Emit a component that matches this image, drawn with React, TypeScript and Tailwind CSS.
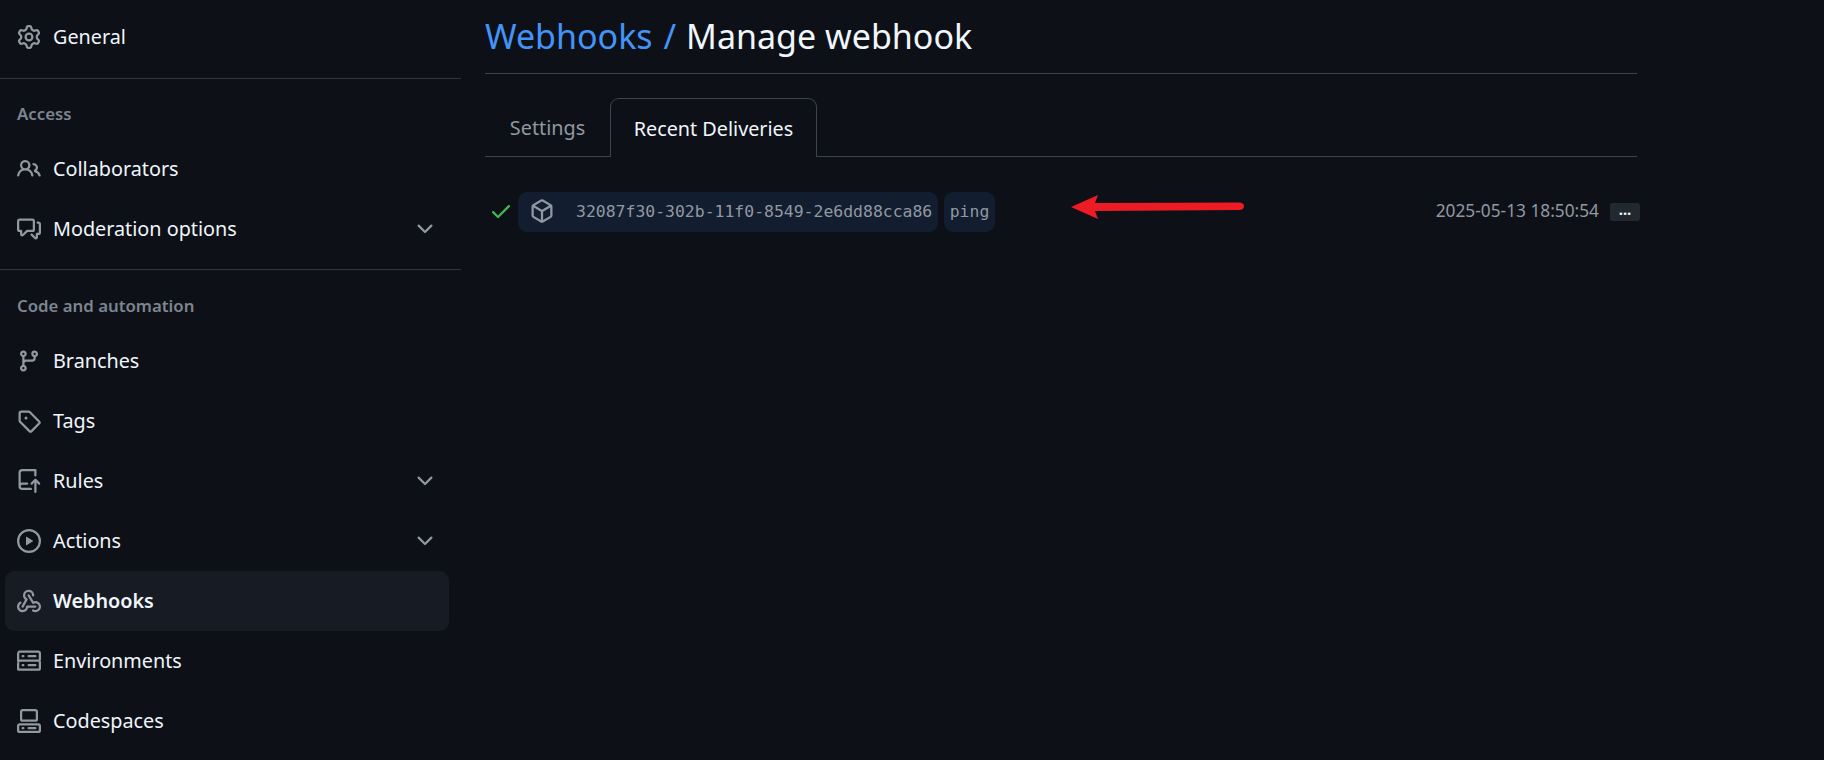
// octicons, 16px variants: the reference scales these up so strokes are heavier than the 24px set
const icons = {
  gear: 'M8 0a8.2 8.2 0 0 1 .701.031C9.444.095 9.99.645 10.16 1.29l.288 1.107c.018.066.079.158.212.224.231.114.454.243.668.386.123.082.233.09.299.071l1.103-.303c.644-.176 1.392.021 1.82.63.27.385.506.792.704 1.218.315.675.111 1.422-.364 1.891l-.814.806c-.049.048-.098.147-.088.294.016.257.016.515 0 .772-.01.147.038.246.088.294l.814.806c.475.469.679 1.216.364 1.891a7.977 7.977 0 0 1-.704 1.217c-.428.61-1.176.807-1.82.63l-1.102-.302c-.067-.019-.177-.011-.3.071a5.909 5.909 0 0 1-.668.386c-.133.066-.194.158-.211.224l-.29 1.106c-.168.646-.715 1.196-1.458 1.26a8.006 8.006 0 0 1-1.402 0c-.743-.064-1.289-.614-1.458-1.26l-.289-1.106c-.018-.066-.079-.158-.212-.224a5.738 5.738 0 0 1-.668-.386c-.123-.082-.233-.09-.299-.071l-1.103.303c-.644.176-1.392-.021-1.82-.63a8.12 8.12 0 0 1-.704-1.218c-.315-.675-.111-1.422.363-1.891l.815-.806c.05-.048.098-.147.088-.294a6.214 6.214 0 0 1 0-.772c.01-.147-.038-.246-.088-.294l-.815-.806C.635 6.045.431 5.298.746 4.623a7.92 7.92 0 0 1 .704-1.217c.428-.61 1.176-.807 1.82-.63l1.102.302c.067.019.177.011.3-.071.214-.143.437-.272.668-.386.133-.066.194-.158.211-.224l.29-1.106C6.009.645 6.556.095 7.299.03 7.53.01 7.764 0 8 0Zm-.571 1.525c-.036.003-.108.036-.137.146l-.289 1.105c-.147.561-.549.967-.998 1.189-.173.086-.34.183-.5.29-.417.278-.97.423-1.529.27l-1.103-.303c-.109-.03-.175.016-.195.045-.22.312-.412.644-.573.99-.014.031-.021.11.059.19l.815.806c.411.406.562.957.53 1.456a4.709 4.709 0 0 0 0 .582c.032.499-.119 1.05-.53 1.456l-.815.806c-.081.08-.073.159-.059.19.162.346.353.677.573.989.02.03.085.076.195.046l1.102-.303c.56-.153 1.113-.008 1.53.27.161.107.328.204.501.29.447.222.85.629.997 1.189l.289 1.105c.029.109.101.143.137.146a6.6 6.6 0 0 0 1.142 0c.036-.003.108-.036.137-.146l.289-1.105c.147-.561.549-.967.998-1.189.173-.086.34-.183.5-.29.417-.278.97-.423 1.529-.27l1.103.303c.109.029.175-.016.195-.045.22-.313.411-.644.573-.99.014-.031.021-.11-.059-.19l-.815-.806c-.411-.406-.562-.957-.53-1.456a4.709 4.709 0 0 0 0-.582c-.032-.499.119-1.05.53-1.456l.815-.806c.081-.08.073-.159.059-.19a6.464 6.464 0 0 0-.573-.989c-.02-.03-.085-.076-.195-.046l-1.102.303c-.56.153-1.113.008-1.53-.27a4.44 4.44 0 0 0-.501-.29c-.447-.222-.85-.629-.997-1.189l-.289-1.105c-.029-.11-.101-.143-.137-.146a6.6 6.6 0 0 0-1.142 0ZM11 8a3 3 0 1 1-6 0 3 3 0 0 1 6 0ZM9.5 8a1.5 1.5 0 1 0-3.001.001A1.5 1.5 0 0 0 9.5 8Z',
  people: 'M2 5.5a3.5 3.5 0 1 1 5.898 2.549 5.508 5.508 0 0 1 3.034 4.084.75.75 0 1 1-1.482.235 4 4 0 0 0-7.9 0 .75.75 0 0 1-1.482-.236A5.507 5.507 0 0 1 3.102 8.05 3.493 3.493 0 0 1 2 5.5ZM11 4a3.001 3.001 0 0 1 2.22 5.018 5.01 5.01 0 0 1 2.56 3.012.749.749 0 0 1-.885.954.752.752 0 0 1-.549-.514 3.507 3.507 0 0 0-2.522-2.372.75.75 0 0 1-.574-.73v-.352a.75.75 0 0 1 .416-.672A1.5 1.5 0 0 0 11 5.5.75.75 0 0 1 11 4Zm-5.5-.5a2 2 0 1 0-.001 3.999A2 2 0 0 0 5.5 3.5Z',
  discussion: 'M1.75 1h8.5c.966 0 1.75.784 1.75 1.75v5.5A1.75 1.75 0 0 1 10.25 10H7.061l-2.574 2.573A1.458 1.458 0 0 1 2 11.543V10h-.25A1.75 1.75 0 0 1 0 8.25v-5.5C0 1.784.784 1 1.75 1ZM1.5 2.75v5.5c0 .138.112.25.25.25h1a.75.75 0 0 1 .75.75v2.19l2.72-2.72a.749.749 0 0 1 .53-.22h3.5a.25.25 0 0 0 .25-.25v-5.5a.25.25 0 0 0-.25-.25h-8.5a.25.25 0 0 0-.25.25Zm13 2a.25.25 0 0 0-.25-.25h-.5a.75.75 0 0 1 0-1.5h.5c.966 0 1.75.784 1.75 1.75v5.5A1.75 1.75 0 0 1 14.25 12H14v1.543a1.458 1.458 0 0 1-2.487 1.03L9.22 12.28a.749.749 0 0 1 .326-1.275.749.749 0 0 1 .734.215l2.22 2.22v-2.19a.75.75 0 0 1 .75-.75h1a.25.25 0 0 0 .25-.25Z',
  branch: 'M9.5 3.25a2.25 2.25 0 1 1 3 2.122V6A2.5 2.5 0 0 1 10 8.5H6a1 1 0 0 0-1 1v1.128a2.251 2.251 0 1 1-1.5 0V5.372a2.25 2.25 0 1 1 1.5 0v1.836A2.493 2.493 0 0 1 6 7h4a1 1 0 0 0 1-1v-.628A2.25 2.25 0 0 1 9.5 3.25Zm-6 0a.75.75 0 1 0 1.5 0 .75.75 0 0 0-1.5 0Zm8.25-.75a.75.75 0 1 0 0 1.5.75.75 0 0 0 0-1.5ZM4.25 12a.75.75 0 1 0 0 1.5.75.75 0 0 0 0-1.5Z',
  tag: 'M1 7.775V2.75C1 1.784 1.784 1 2.75 1h5.025c.464 0 .91.184 1.238.513l6.25 6.25a1.75 1.75 0 0 1 0 2.474l-5.026 5.026a1.75 1.75 0 0 1-2.474 0l-6.25-6.25A1.752 1.752 0 0 1 1 7.775Zm1.5 0c0 .066.026.13.073.177l6.25 6.25a.25.25 0 0 0 .354 0l5.025-5.025a.25.25 0 0 0 0-.354l-6.25-6.25a.25.25 0 0 0-.177-.073H2.75a.25.25 0 0 0-.25.25ZM6 5a1 1 0 1 1 0 2 1 1 0 0 1 0-2Z',
  repoPush: 'M1 2.5A2.5 2.5 0 0 1 3.5 0h8.75a.75.75 0 0 1 .75.75v3.5a.75.75 0 0 1-1.5 0V1.5h-8a1 1 0 0 0-1 1v6.708A2.493 2.493 0 0 1 3.5 9h3.25a.75.75 0 0 1 0 1.5H3.5a1 1 0 0 0 0 2h5.75a.75.75 0 0 1 0 1.5H3.5A2.5 2.5 0 0 1 1 11.5Zm13.23 7.79h-.001l-1.224-1.224v6.184a.75.75 0 0 1-1.5 0V9.066L10.28 10.29a.75.75 0 0 1-1.06-1.061l2.505-2.504a.75.75 0 0 1 1.06 0L15.29 9.23a.751.751 0 0 1-.018 1.042.751.751 0 0 1-1.042.018Z',
  play: 'M8 0a8 8 0 1 1 0 16A8 8 0 0 1 8 0ZM1.5 8a6.5 6.5 0 1 0 13 0 6.5 6.5 0 0 0-13 0Zm4.879-2.773 4.264 2.559a.25.25 0 0 1 0 .428l-4.264 2.559A.25.25 0 0 1 6 10.559V5.442a.25.25 0 0 1 .379-.215Z',
  webhook: 'M5.5 4.25a2.25 2.25 0 0 1 4.5 0 .75.75 0 0 0 1.5 0 3.75 3.75 0 1 0-6.14 2.889l-2.272 4.258a.75.75 0 0 0 1.324.706L7 7.25a.75.75 0 0 0-.309-1.015A2.25 2.25 0 0 1 5.5 4.25Z M7.364 3.607a.75.75 0 0 1 1.03.257l2.608 4.349a3.75 3.75 0 1 1-.628 6.785.75.75 0 0 1 .752-1.299 2.25 2.25 0 1 0-.033-3.88.75.75 0 0 1-1.03-.256L7.107 4.636a.75.75 0 0 1 .257-1.03Z M2.9 8.776A.75.75 0 0 1 2.625 9.8 2.25 2.25 0 1 0 6 11.75a.75.75 0 0 1 .75-.751h5.5a.75.75 0 0 1 0 1.5H7.425a3.751 3.751 0 1 1-5.55-3.998.75.75 0 0 1 1.024.274Z',
  server: 'M1.75 1h12.5c.966 0 1.75.784 1.75 1.75v4c0 .372-.116.717-.314 1 .198.283.314.628.314 1v4a1.75 1.75 0 0 1-1.75 1.75H1.75A1.75 1.75 0 0 1 0 13.75v-4c0-.372.116-.717.314-1a1.739 1.739 0 0 1-.314-1v-4C0 1.784.784 1 1.75 1ZM1.5 2.75v4c0 .138.112.25.25.25h12.5a.25.25 0 0 0 .25-.25v-4a.25.25 0 0 0-.25-.25H1.75a.25.25 0 0 0-.25.25Zm.25 5.75a.25.25 0 0 0-.25.25v4c0 .138.112.25.25.25h12.5a.25.25 0 0 0 .25-.25v-4a.25.25 0 0 0-.25-.25ZM7 4.75A.75.75 0 0 1 7.75 4h4.5a.75.75 0 0 1 0 1.5h-4.5A.75.75 0 0 1 7 4.75ZM7.75 10h4.5a.75.75 0 0 1 0 1.5h-4.5a.75.75 0 0 1 0-1.5ZM3 4.75A.75.75 0 0 1 3.75 4h.5a.75.75 0 0 1 0 1.5h-.5A.75.75 0 0 1 3 4.75ZM3.75 10h.5a.75.75 0 0 1 0 1.5h-.5a.75.75 0 0 1 0-1.5Z',
  codespaces: 'M0 11.25c0-.966.784-1.75 1.75-1.75h12.5c.966 0 1.75.784 1.75 1.75v3A1.75 1.75 0 0 1 14.25 16H1.75A1.75 1.75 0 0 1 0 14.25Zm2-9.5C2 .784 2.784 0 3.75 0h8.5C13.216 0 14 .784 14 1.75v5a1.75 1.75 0 0 1-1.75 1.75h-8.5A1.75 1.75 0 0 1 2 6.75Zm1.75-.25a.25.25 0 0 0-.25.25v5c0 .138.112.25.25.25h8.5a.25.25 0 0 0 .25-.25v-5a.25.25 0 0 0-.25-.25Zm-2 9.5a.25.25 0 0 0-.25.25v3c0 .138.112.25.25.25h12.5a.25.25 0 0 0 .25-.25v-3a.25.25 0 0 0-.25-.25ZM7 12.75a.75.75 0 0 1 .75-.75h4.5a.75.75 0 0 1 0 1.5h-4.5a.75.75 0 0 1-.75-.75Zm-4 0a.75.75 0 0 1 .75-.75h.5a.75.75 0 0 1 0 1.5h-.5a.75.75 0 0 1-.75-.75Z',
  chevron: 'M12.78 5.22a.749.749 0 0 1 0 1.06l-4.25 4.25a.749.749 0 0 1-1.06 0L3.22 6.28a.749.749 0 1 1 1.06-1.06L8 8.939l3.72-3.719a.749.749 0 0 1 1.06 0Z',
  check: 'M13.78 4.22a.75.75 0 0 1 0 1.06l-7.25 7.25a.75.75 0 0 1-1.06 0L2.22 9.28a.751.751 0 0 1 .018-1.042.751.751 0 0 1 1.042-.018L6 10.94l6.72-6.72a.75.75 0 0 1 1.06 0Z',
  packageBox: 'm8.878.392 5.25 3.045c.54.314.872.89.872 1.514v6.098a1.75 1.75 0 0 1-.872 1.514l-5.25 3.045a1.75 1.75 0 0 1-1.756 0l-5.25-3.045A1.75 1.75 0 0 1 1 11.049V4.951c0-.624.332-1.201.872-1.514L7.122.392a1.75 1.75 0 0 1 1.756 0ZM7.875 1.69l-4.63 2.685L8 7.133l4.755-2.758-4.63-2.685a.248.248 0 0 0-.25 0ZM2.5 5.677v5.372c0 .09.047.171.125.216l4.625 2.683V8.432Zm6.25 8.271 4.625-2.683a.25.25 0 0 0 .125-.216V5.677L8.75 8.432Z',
}

type IconName = keyof typeof icons

function Octicon({ name, className }: { name: IconName; className?: string }) {
  return (
    <svg width="24" height="24" viewBox="0 0 16 16" fill="currentColor" className={className}>
      <path d={icons[name]} />
    </svg>
  )
}

type NavProps = {
  icon: IconName
  label: string
  chevron?: boolean
  active?: boolean
}

function NavItem({ icon, label, chevron, active }: NavProps) {
  return (
    <div
      className={`mx-[5px] flex h-[60px] w-[444px] items-center rounded-[9px] pl-[12px] pr-[12px] text-[19.8px] ${
        active ? 'bg-[#171b23] font-semibold' : ''
      }`}
    >
      <Octicon name={icon} className="shrink-0 text-[#9198a1]" />
      <span className="ml-[12px] flex-1 text-[#f0f6fc]">{label}</span>
      {chevron && <Octicon name="chevron" className="text-[#9198a1]" />}
    </div>
  )
}

function SectionTitle({ children }: { children: string }) {
  return (
    <div className="flex h-[30px] items-center pl-[17px] text-[16.8px] font-semibold text-[#7d8590]">
      {children}
    </div>
  )
}

function Sidebar() {
  return (
    <aside className="w-[461px] shrink-0 pt-[7px]">
      <NavItem icon="gear" label="General" />
      <div className="mt-[11px] h-px bg-[#30363d]" />
      <div className="mt-[20px] mb-[10px]">
        <SectionTitle>Access</SectionTitle>
      </div>
      <NavItem icon="people" label="Collaborators" />
      <NavItem icon="discussion" label="Moderation options" chevron />
      <div className="mt-[10px] h-px bg-[#30363d]" />
      <div className="mt-[21px] mb-[10px]">
        <SectionTitle>Code and automation</SectionTitle>
      </div>
      <NavItem icon="branch" label="Branches" />
      <NavItem icon="tag" label="Tags" />
      <NavItem icon="repoPush" label="Rules" chevron />
      <NavItem icon="play" label="Actions" chevron />
      <NavItem icon="webhook" label="Webhooks" active />
      <NavItem icon="server" label="Environments" />
      <NavItem icon="codespaces" label="Codespaces" />
    </aside>
  )
}

function RedArrow() {
  return (
    <svg className="absolute left-[586px] top-[1px]" width="176" height="28" viewBox="0 0 176 28">
      <path d="M0 14 L27 2 L24 10 L169 9.5 Q173 10 173 13 Q173 16.5 169 17 L24 18 L27 26 Z" fill="#ed1c24" />
    </svg>
  )
}

function DeliveryRow() {
  return (
    <div className="relative mt-[35px] flex h-[40px] items-center">
      <Octicon name="check" className="mb-[2px] ml-[4px] text-[#3fb950]" />
      <div className="ml-[5px] flex h-[40px] w-[420px] items-center rounded-[9px] bg-[#121d2f] pl-[12px]">
        <Octicon name="packageBox" className="mb-[2px] text-[#9198a1]" />
        <span className="ml-[22px] whitespace-nowrap font-['DejaVu_Sans_Mono',monospace] text-[16.45px] text-[#9198a1]">
          32087f30-302b-11f0-8549-2e6dd88cca86
        </span>
      </div>
      <div className="ml-[6px] flex h-[40px] w-[51px] items-center justify-center rounded-[9px] bg-[#121d2f] font-['DejaVu_Sans_Mono',monospace] text-[16.45px] text-[#9198a1]">
        ping
      </div>
      <RedArrow />
      <span className="mb-[3px] ml-auto text-[17.3px] text-[#9198a1]">2025-05-13 18:50:54</span>
      <div className="ml-[11px] mr-[-3px] flex h-[18px] w-[30px] items-center justify-center rounded-[3px] bg-[#212830] text-[15px] font-bold leading-none text-[#f0f6fc]">
        <span className="mt-[-5px]">...</span>
      </div>
    </div>
  )
}

function Main() {
  return (
    <main className="ml-[24px] w-[1152px]">
      <div className="flex h-[74px] items-center border-b border-[#3d444d] text-[34px] text-[#f0f6fc]">
        <span className="text-[#4493f8] [word-spacing:2px]">Webhooks /</span>
        <span className="ml-[10px]">Manage webhook</span>
      </div>
      <div className="mt-[24px] flex h-[59px] items-stretch border-b border-[#3d444d] text-[19.8px]">
        <div className="flex w-[125px] items-center justify-center pt-[2px] text-[#9198a1]">Settings</div>
        <div className="mb-[-1px] flex w-[207px] items-center justify-center rounded-t-[9px] border border-b-0 border-[#3d444d] bg-[#0d1117] pt-[2px] text-[#f0f6fc]">
          Recent Deliveries
        </div>
      </div>
      <DeliveryRow />
    </main>
  )
}

export default function App() {
  return (
    <div className="flex h-[760px] w-[1824px] overflow-hidden bg-[#0d1117] font-['Noto_Sans',sans-serif]">
      <Sidebar />
      <Main />
    </div>
  )
}
